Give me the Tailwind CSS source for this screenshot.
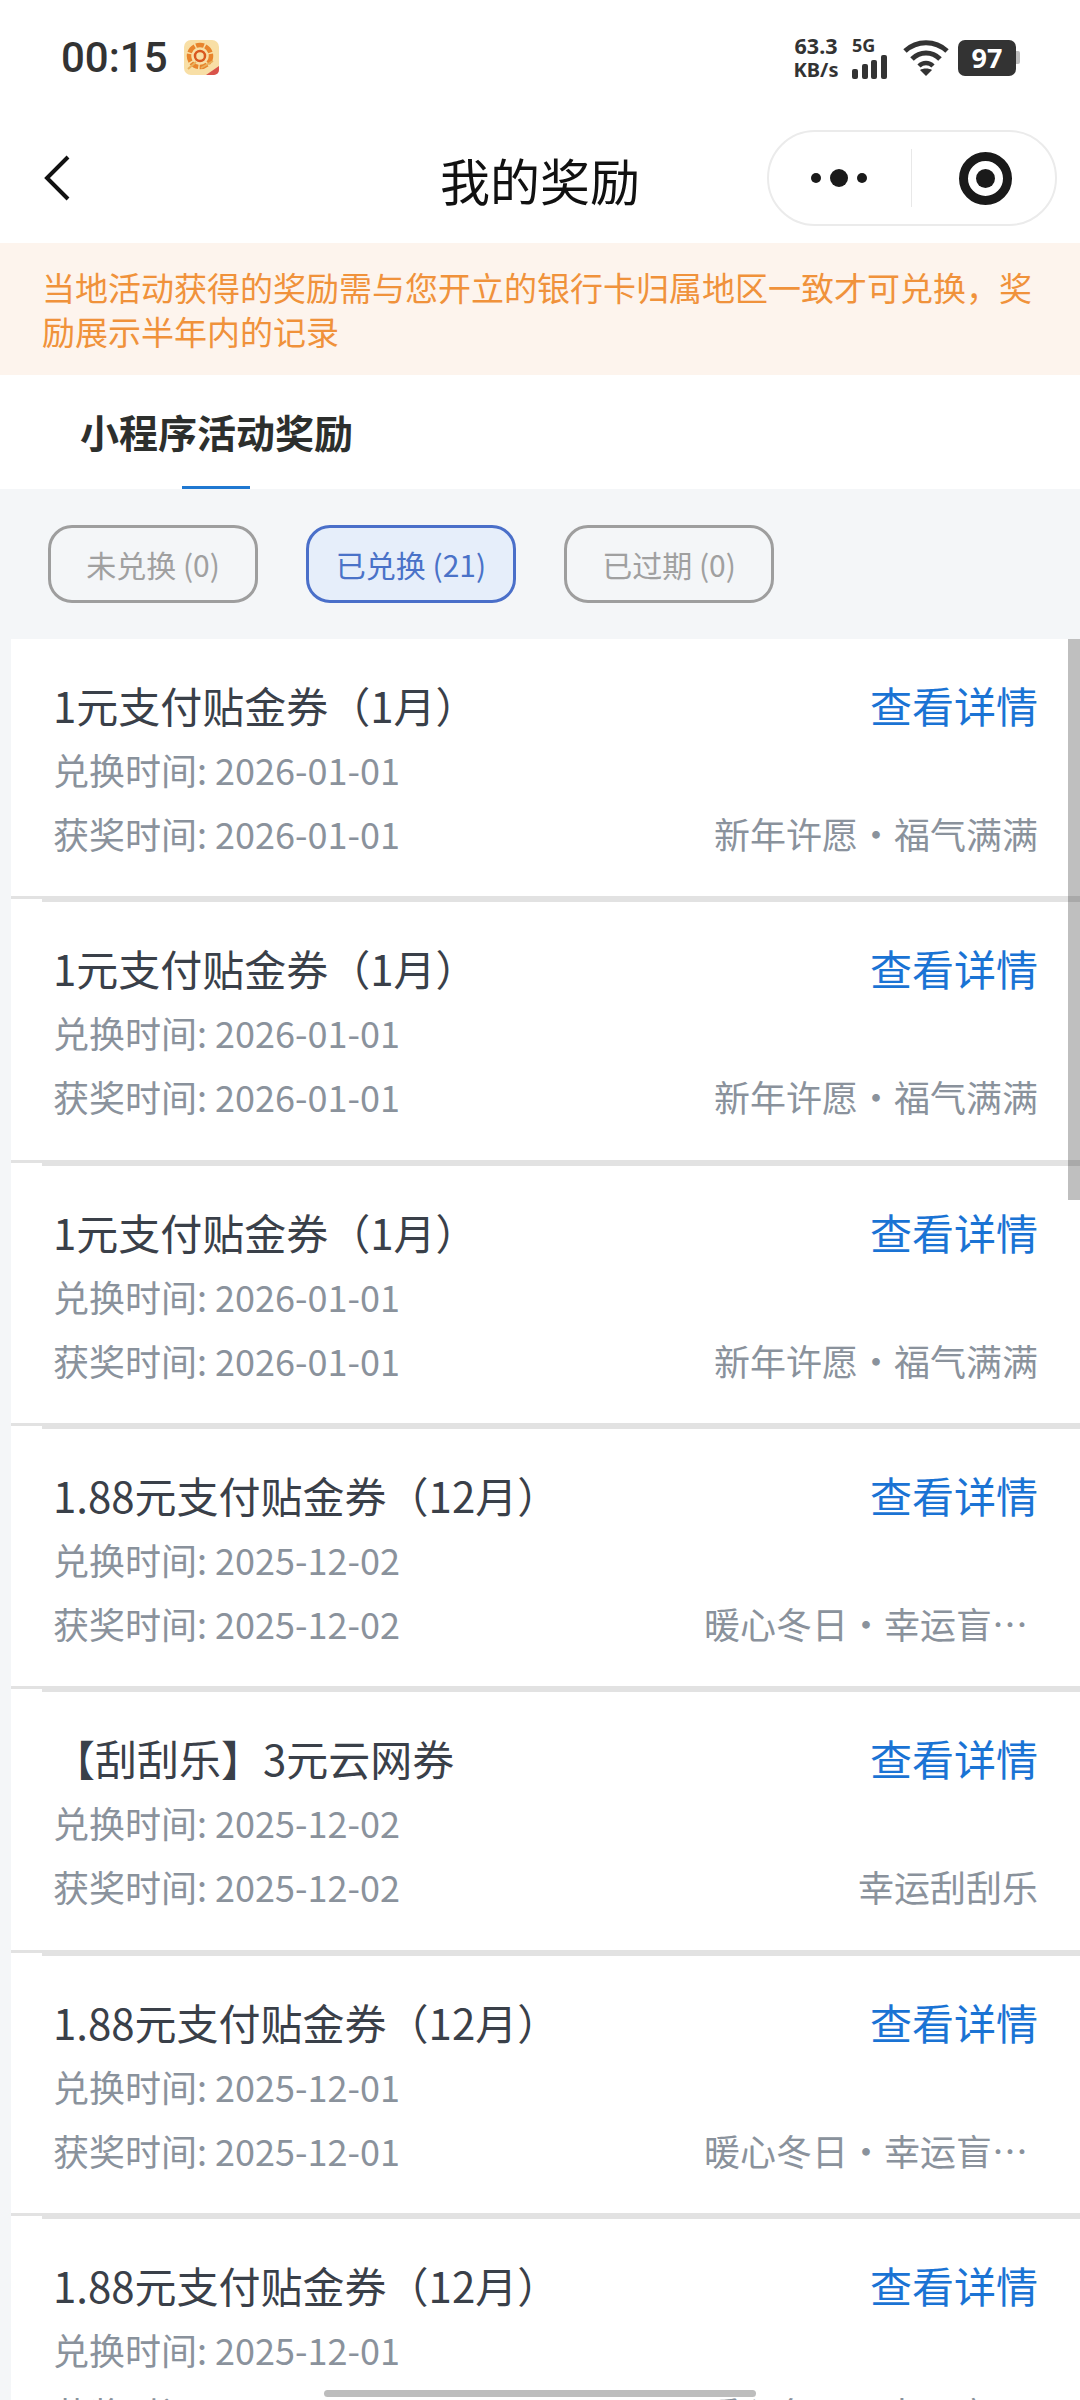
<!DOCTYPE html>
<html lang="zh-CN">
<head>
  <meta charset="utf-8">
  <meta name="viewport" content="width=device-width, initial-scale=1">
  <title>我的奖励</title>
  <script src="https://cdn.jsdelivr.net/npm/@tailwindcss/browser@4"></script>
</head>
<body class="bg-[#f4f6f8] font-['Noto_Sans_CJK_SC',sans-serif]">
  <div class="relative h-[2400px] w-[1080px] overflow-hidden">

    <!-- status bar -->
    <div class="flex h-[115px] items-center bg-white pl-[61px] pr-[60px] text-[#333333]">
      <span class="font-['Roboto',sans-serif] text-[42px] font-medium leading-none">00:15</span>
      <svg class="ml-[16px]" width="35" height="35" viewBox="0 0 35 35">
        <rect width="35" height="35" rx="7" fill="#f8dfa6"/>
        <circle cx="16" cy="16" r="11" fill="none" stroke="#e8842c" stroke-width="4.5" stroke-dasharray="8 1.5"/>
        <circle cx="16" cy="16" r="5" fill="none" stroke="#d9581f" stroke-width="2.5"/>
        <path d="M4 29 L12 22 M17 28 L29 21" stroke="#e9b05c" stroke-width="2"/>
        <path d="M22 35 L35 26 V30 a5 5 0 0 1 -5 5 Z" fill="#d9534a"/>
      </svg>
      <div class="ml-auto flex items-center">
        <div class="flex w-[46px] flex-col items-center font-['Noto_Sans',sans-serif] text-[21.5px] font-bold leading-[24px]">
          <span>63.3</span>
          <span class="text-[20px]">KB/s</span>
        </div>
        <div class="ml-[13px] flex w-[43px] flex-col">
          <span class="font-['Noto_Sans',sans-serif] text-[18px] font-bold leading-[16px]">5G</span>
          <div class="mt-[2px] flex items-end gap-[3.5px]">
            <span class="h-[10px] w-[6px] rounded-[2px] bg-[#333333]"></span>
            <span class="h-[15px] w-[6px] rounded-[2px] bg-[#333333]"></span>
            <span class="h-[19px] w-[6px] rounded-[2px] bg-[#333333]"></span>
            <span class="h-[24px] w-[6px] rounded-[2px] bg-[#333333]"></span>
          </div>
        </div>
        <svg class="ml-[8px]" width="46" height="38" viewBox="0 0 46 38" fill="none" stroke="#333333" stroke-width="5">
          <path d="M2 12 C14 1 32 1 44 12"/>
          <path d="M9 20 C17 12 29 12 37 20"/>
          <path d="M16 27 C20 23 26 23 30 27" stroke-width="4.5"/>
          <path d="M17 31 L23 37 L29 31 C26 29 20 29 17 31 Z" fill="#333333" stroke="none"/>
        </svg>
        <div class="ml-[9px] flex items-center">
          <div class="flex h-[36px] w-[58px] items-center justify-center rounded-[7px] bg-[#333333] font-['Noto_Sans',sans-serif] text-[27px] font-bold leading-none text-white">97</div>
          <span class="h-[13px] w-[4px] rounded-r-[2px] bg-[#bdbdbd]"></span>
        </div>
      </div>
    </div>

    <!-- title bar -->
    <div class="relative flex h-[128px] items-center justify-center bg-white">
      <svg class="absolute left-[41px] top-[38px]" width="34" height="50" viewBox="0 0 34 50" fill="none" stroke="#111111" stroke-width="4">
        <path d="M27 4 L6 25 L27 46"/>
      </svg>
      <span class="text-[50px] leading-none text-[#111111]">我的奖励</span>
      <div class="absolute left-[767px] top-[15px] flex h-[96px] w-[290px] items-center rounded-full border-2 border-[#ebebeb]">
        <div class="flex w-[142px] items-center justify-center gap-[9px] pr-[2px]">
          <span class="size-[10px] rounded-full bg-[#1a1a1a]"></span>
          <span class="size-[18px] rounded-full bg-[#1a1a1a]"></span>
          <span class="size-[10px] rounded-full bg-[#1a1a1a]"></span>
        </div>
        <span class="h-[58px] w-[1px] bg-[#e8e8e8]"></span>
        <div class="flex flex-1 items-center justify-center pl-[4px]">
          <div class="flex size-[53px] items-center justify-center rounded-full border-[9px] border-[#1a1a1a]">
            <span class="size-[19px] rounded-full bg-[#1a1a1a]"></span>
          </div>
        </div>
      </div>
    </div>

    <!-- notice -->
    <div class="h-[132px] bg-[#fdf4ed] px-[42px] pt-[22px] text-[33px] leading-[44px] text-[#f0923b]">当地活动获得的奖励需与您开立的银行卡归属地区一致才可兑换，奖励展示半年内的记录</div>

    <!-- tab -->
    <div class="relative h-[114px] bg-white pl-[80px] pt-[29px]">
      <span class="text-[39px] font-bold leading-[54px] text-[#2d2f2d]">小程序活动奖励</span>
      <span class="absolute bottom-0 left-[182px] h-[3px] w-[68px] bg-[#1f78d1]"></span>
    </div>

    <!-- filters -->
    <div class="flex h-[150px] gap-[48px] pl-[48px] pt-[36px]">
      <div class="flex h-[78px] w-[210px] items-center justify-center rounded-[24px] border-[3px] border-[#9e9e9e] text-[30px] text-[#a0a0a0]">未兑换 (0)</div>
      <div class="flex h-[78px] w-[210px] items-center justify-center rounded-[24px] border-[3px] border-[#4a6fc9] bg-[#e6eefa] text-[30px] text-[#4a72c8]">已兑换 (21)</div>
      <div class="flex h-[78px] w-[210px] items-center justify-center rounded-[24px] border-[3px] border-[#9e9e9e] text-[30px] text-[#a0a0a0]">已过期 (0)</div>
    </div>

    <!-- reward list -->
    <div class="ml-[11px] bg-white">
      <div class="flex h-[263.33px] flex-col">
        <div class="flex-1 pl-[42px] pr-[42px] pt-[36px]">
          <div class="flex h-[60px] items-center justify-between text-[42px] leading-[60px] text-[#3a4049]"><span>1元支付贴金券（1月）</span><span class="text-[#1a73d4]">查看详情</span></div>
          <div class="mt-[2px] h-[64px] text-[36px] leading-[64px] text-[#8a929c]">兑换时间: 2026-01-01</div>
          <div class="flex h-[64px] justify-between text-[36px] leading-[64px] text-[#8a929c]"><span>获奖时间: 2026-01-01</span><span>新年许愿・福气满满</span></div>
        </div>
        <div class="h-[3px] bg-[#e2e2e2]"></div>
        <div class="ml-[31px] h-[3px] bg-[#e2e2e2]"></div>
      </div>
      <div class="flex h-[263.33px] flex-col">
        <div class="flex-1 pl-[42px] pr-[42px] pt-[36px]">
          <div class="flex h-[60px] items-center justify-between text-[42px] leading-[60px] text-[#3a4049]"><span>1元支付贴金券（1月）</span><span class="text-[#1a73d4]">查看详情</span></div>
          <div class="mt-[2px] h-[64px] text-[36px] leading-[64px] text-[#8a929c]">兑换时间: 2026-01-01</div>
          <div class="flex h-[64px] justify-between text-[36px] leading-[64px] text-[#8a929c]"><span>获奖时间: 2026-01-01</span><span>新年许愿・福气满满</span></div>
        </div>
        <div class="h-[3px] bg-[#e2e2e2]"></div>
        <div class="ml-[31px] h-[3px] bg-[#e2e2e2]"></div>
      </div>
      <div class="flex h-[263.33px] flex-col">
        <div class="flex-1 pl-[42px] pr-[42px] pt-[36px]">
          <div class="flex h-[60px] items-center justify-between text-[42px] leading-[60px] text-[#3a4049]"><span>1元支付贴金券（1月）</span><span class="text-[#1a73d4]">查看详情</span></div>
          <div class="mt-[2px] h-[64px] text-[36px] leading-[64px] text-[#8a929c]">兑换时间: 2026-01-01</div>
          <div class="flex h-[64px] justify-between text-[36px] leading-[64px] text-[#8a929c]"><span>获奖时间: 2026-01-01</span><span>新年许愿・福气满满</span></div>
        </div>
        <div class="h-[3px] bg-[#e2e2e2]"></div>
        <div class="ml-[31px] h-[3px] bg-[#e2e2e2]"></div>
      </div>
      <div class="flex h-[263.33px] flex-col">
        <div class="flex-1 pl-[42px] pr-[42px] pt-[36px]">
          <div class="flex h-[60px] items-center justify-between text-[42px] leading-[60px] text-[#3a4049]"><span>1.88元支付贴金券（12月）</span><span class="text-[#1a73d4]">查看详情</span></div>
          <div class="mt-[2px] h-[64px] text-[36px] leading-[64px] text-[#8a929c]">兑换时间: 2025-12-02</div>
          <div class="flex h-[64px] justify-between text-[36px] leading-[64px] text-[#8a929c]"><span>获奖时间: 2025-12-02</span><span class="w-[334px]">暖心冬日・幸运盲…</span></div>
        </div>
        <div class="h-[3px] bg-[#e2e2e2]"></div>
        <div class="ml-[31px] h-[3px] bg-[#e2e2e2]"></div>
      </div>
      <div class="flex h-[263.33px] flex-col">
        <div class="flex-1 pl-[42px] pr-[42px] pt-[36px]">
          <div class="flex h-[60px] items-center justify-between text-[42px] leading-[60px] text-[#3a4049]"><span>【刮刮乐】3元云网券</span><span class="text-[#1a73d4]">查看详情</span></div>
          <div class="mt-[2px] h-[64px] text-[36px] leading-[64px] text-[#8a929c]">兑换时间: 2025-12-02</div>
          <div class="flex h-[64px] justify-between text-[36px] leading-[64px] text-[#8a929c]"><span>获奖时间: 2025-12-02</span><span>幸运刮刮乐</span></div>
        </div>
        <div class="h-[3px] bg-[#e2e2e2]"></div>
        <div class="ml-[31px] h-[3px] bg-[#e2e2e2]"></div>
      </div>
      <div class="flex h-[263.33px] flex-col">
        <div class="flex-1 pl-[42px] pr-[42px] pt-[36px]">
          <div class="flex h-[60px] items-center justify-between text-[42px] leading-[60px] text-[#3a4049]"><span>1.88元支付贴金券（12月）</span><span class="text-[#1a73d4]">查看详情</span></div>
          <div class="mt-[2px] h-[64px] text-[36px] leading-[64px] text-[#8a929c]">兑换时间: 2025-12-01</div>
          <div class="flex h-[64px] justify-between text-[36px] leading-[64px] text-[#8a929c]"><span>获奖时间: 2025-12-01</span><span class="w-[334px]">暖心冬日・幸运盲…</span></div>
        </div>
        <div class="h-[3px] bg-[#e2e2e2]"></div>
        <div class="ml-[31px] h-[3px] bg-[#e2e2e2]"></div>
      </div>
      <div class="flex h-[263.33px] flex-col">
        <div class="flex-1 pl-[42px] pr-[42px] pt-[36px]">
          <div class="flex h-[60px] items-center justify-between text-[42px] leading-[60px] text-[#3a4049]"><span>1.88元支付贴金券（12月）</span><span class="text-[#1a73d4]">查看详情</span></div>
          <div class="mt-[2px] h-[64px] text-[36px] leading-[64px] text-[#8a929c]">兑换时间: 2025-12-01</div>
          <div class="flex h-[64px] justify-between text-[36px] leading-[64px] text-[#8a929c]"><span>获奖时间: 2025-12-01</span><span class="w-[334px]">暖心冬日・幸运盲…</span></div>
        </div>
      </div>
    </div>

    <!-- scrollbars -->
    <div class="absolute left-[1068px] top-[639px] h-[561px] w-[12px] bg-black/25"></div>
    <div class="absolute left-[324px] top-[2390px] h-[7px] w-[432px] rounded-full bg-[#bdbdbd]"></div>
  </div>
</body>
</html>
